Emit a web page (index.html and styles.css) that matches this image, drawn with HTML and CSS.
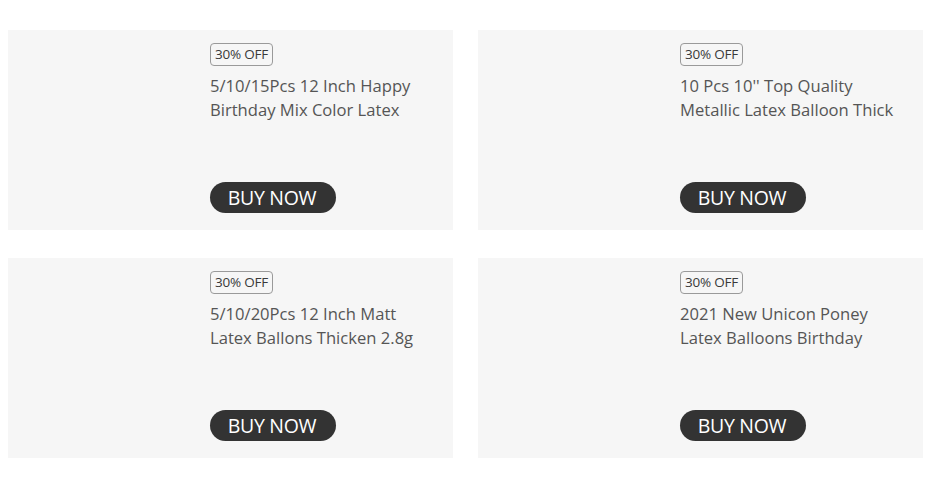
FILE: index.html
```html
<!DOCTYPE html>
<html>
<head>
<meta charset="utf-8">
<link rel="stylesheet" href="styles.css">
</head>
<body>
<div class="grid">
  <div class="card">
    <div class="thumb"></div>
    <div class="info">
      <span class="badge">30% OFF</span>
      <p class="title">5/10/15Pcs 12 Inch Happy Birthday Mix Color Latex</p>
      <a class="buy">BUY NOW</a>
    </div>
  </div>
  <div class="card">
    <div class="thumb"></div>
    <div class="info">
      <span class="badge">30% OFF</span>
      <p class="title">10 Pcs 10'' Top Quality Metallic Latex Balloon Thick</p>
      <a class="buy">BUY NOW</a>
    </div>
  </div>
  <div class="card">
    <div class="thumb"></div>
    <div class="info">
      <span class="badge">30% OFF</span>
      <p class="title">5/10/20Pcs 12 Inch Matt Latex Ballons Thicken 2.8g</p>
      <a class="buy">BUY NOW</a>
    </div>
  </div>
  <div class="card">
    <div class="thumb"></div>
    <div class="info">
      <span class="badge">30% OFF</span>
      <p class="title">2021 New Unicon Poney Latex Balloons Birthday</p>
      <a class="buy">BUY NOW</a>
    </div>
  </div>
</div>
</body>
</html>
```

FILE: styles.css
```css
body {
  margin: 0;
  background: #fff;
  font-family: "Open Sans", "Noto Sans", sans-serif;
}
.grid {
  display: grid;
  grid-template-columns: 445px 445px;
  column-gap: 25px;
  row-gap: 28px;
  padding: 30px 0 0 8px;
}
.card {
  display: flex;
  height: 200px;
  background: #f6f6f6;
}
.thumb {
  width: 202px;
  flex: none;
}
.info {
  display: flex;
  flex-direction: column;
  align-items: flex-start;
  padding: 13px 0 17px;
  width: 220px;
}
.badge {
  display: inline-block;
  box-sizing: border-box;
  height: 23px;
  line-height: 21px;
  padding: 0 4px;
  border: 1px solid #9a9a9a;
  border-radius: 4px;
  font-size: 13.5px;
  color: #3a3a3a;
  letter-spacing: -0.2px;
}
.title {
  margin: 8px 0 0;
  font-size: 16.6px;
  line-height: 24px;
  color: #555;
}
.buy {
  margin-top: auto;
  display: block;
  box-sizing: border-box;
  width: 126px;
  height: 31px;
  line-height: 32px;
  border-radius: 16px;
  background: #333;
  color: #fff;
  font-size: 19.5px;
  text-align: center;
  letter-spacing: -0.3px;
  padding-right: 2px;
}
```
